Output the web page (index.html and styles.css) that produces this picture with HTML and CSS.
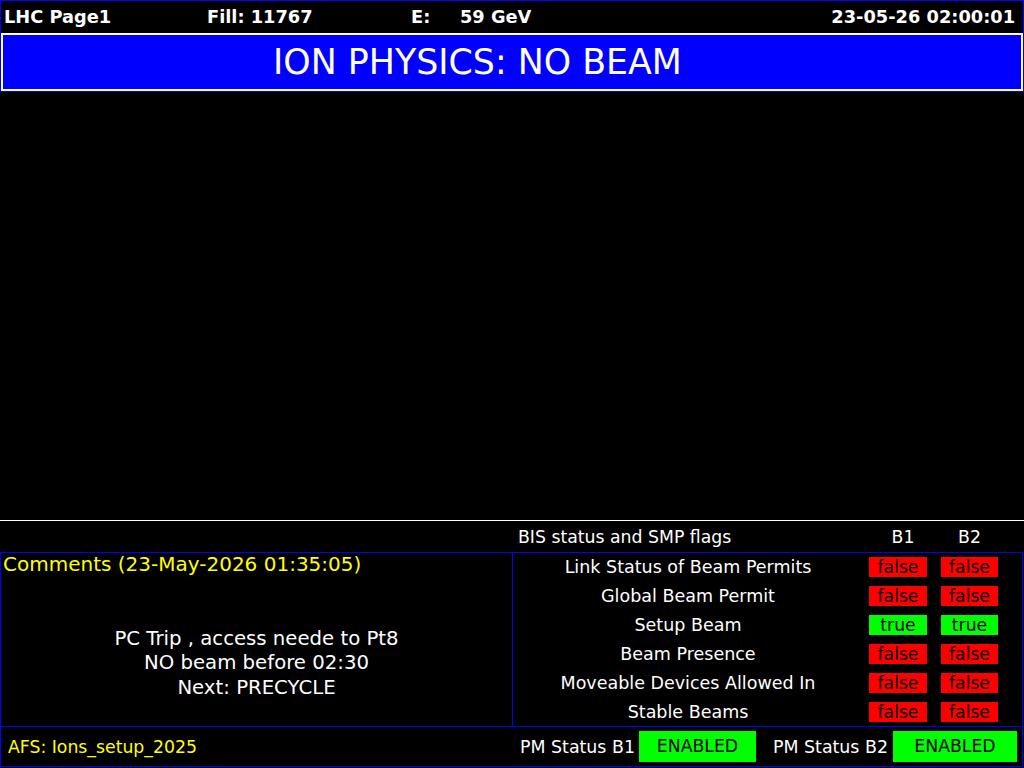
FILE: index.html
```html
<!DOCTYPE html>
<html lang="en">
<head>
    <meta charset="UTF-8">
    <title>LHC Page1</title>
    <link rel="stylesheet" href="styles.css">
</head>
<body>
    <div class="top">
        <div class="topbar">
            <span class="cell">LHC Page1</span>
            <span class="cell">Fill: 11767</span>
            <span class="cell energy"><span class="elabel">E:</span>59 GeV</span>
            <span class="date">23-05-26 02:00:01</span>
        </div>
        <div class="banner">ION PHYSICS: NO BEAM</div>
    </div>

    <div class="plot"></div>

    <div class="bishead">
        <span class="bistitle">BIS status and SMP flags</span>
        <span class="colhead">B1</span>
        <span class="colhead">B2</span>
    </div>

    <div class="bottom">
        <div class="mainrow">
            <div class="comments">
                <div class="ctitle">Comments (23-May-2026 01:35:05)</div>
                <div class="ctext">
                    PC Trip , access neede to Pt8<br>
                    NO beam before 02:30<br>
                    Next: PRECYCLE
                </div>
            </div>
            <div class="flags">
                <div class="flag">
                    <span class="flabel">Link Status of Beam Permits</span>
                    <span class="badge no">false</span>
                    <span class="badge no">false</span>
                </div>
                <div class="flag">
                    <span class="flabel">Global Beam Permit</span>
                    <span class="badge no">false</span>
                    <span class="badge no">false</span>
                </div>
                <div class="flag">
                    <span class="flabel">Setup Beam</span>
                    <span class="badge yes">true</span>
                    <span class="badge yes">true</span>
                </div>
                <div class="flag">
                    <span class="flabel">Beam Presence</span>
                    <span class="badge no">false</span>
                    <span class="badge no">false</span>
                </div>
                <div class="flag">
                    <span class="flabel">Moveable Devices Allowed In</span>
                    <span class="badge no">false</span>
                    <span class="badge no">false</span>
                </div>
                <div class="flag">
                    <span class="flabel">Stable Beams</span>
                    <span class="badge no">false</span>
                    <span class="badge no">false</span>
                </div>
            </div>
        </div>
        <div class="footer">
            <div class="afs">AFS: Ions_setup_2025</div>
            <div class="pm">
                <span class="pmlabel">PM Status B1</span>
                <span class="pmbox b1">ENABLED</span>
                <span class="pmlabel second">PM Status B2</span>
                <span class="pmbox b2">ENABLED</span>
            </div>
        </div>
    </div>
</body>
</html>
```

FILE: styles.css
```css
html, body {
    margin: 0;
    background: #000;
    color: #fff;
    font-family: "DejaVu Sans", sans-serif;
}
body {
    width: 1024px;
    height: 768px;
    overflow: hidden;
}

/* header with fill, energy and time */
.top {
    border: 1px solid #0000ff;
    height: 90px;
}
.topbar {
    height: 32px;
    display: flex;
    align-items: center;
    font-weight: bold;
    font-size: 17.8px;
    line-height: 20px;
}
.cell {
    width: 204px;
}
.topbar .cell:first-child {
    padding-left: 3px;
    width: 203px;
}
.elabel {
    display: inline-block;
    width: 49px;
}
.date {
    margin-left: auto;
    padding-right: 8px;
}
.banner {
    height: 54px;
    border: 2px solid #fff;
    background: #0000ff;
    font-size: 34.8px;
    line-height: 54px;
    padding-left: 270px;
}

.plot {
    height: 428px;
    border-bottom: 1px solid #fff;
}

/* flag header */
.bishead {
    height: 31px;
    display: flex;
    align-items: center;
    font-size: 17.3px;
}
.bistitle {
    width: 356px;
    padding-left: 518px;
}
.colhead {
    width: 58px;
    text-align: center;
}
.colhead + .colhead {
    margin-left: 9px;
    width: 57px;
}

/* bottom box */
.bottom {
    width: 1021px;
    height: 213px;
    border: 1px solid #0000ff;
}
.mainrow {
    height: 173px;
    display: flex;
    border-bottom: 1px solid #0000ff;
}
.comments {
    width: 511px;
}
.ctitle {
    color: #ffff00;
    font-size: 20px;
    line-height: 22px;
    padding-left: 2px;
}
.ctext {
    padding-top: 52px;
    text-align: center;
    font-size: 19.7px;
    line-height: 24.3px;
}
.flags {
    flex: 1;
    border-left: 1px solid #0000ff;
    display: flex;
    flex-direction: column;
}
.flag {
    flex: 1;
    display: flex;
    align-items: center;
}
.flabel {
    width: 350px;
    text-align: center;
    font-size: 17.5px;
}
.badge {
    width: 58px;
    height: 20px;
    line-height: 20px;
    margin-left: 6px;
    text-align: center;
    color: #000;
    font-size: 17.2px;
}
.badge + .badge {
    width: 57px;
    margin-left: 14px;
}
.no {
    background: #ff0000;
}
.yes {
    background: #00ff00;
}

.footer {
    height: 39px;
    display: flex;
    align-items: center;
}
.afs {
    width: 504px;
    padding-left: 7px;
    color: #ffff00;
    font-size: 17.3px;
}
.pm {
    display: flex;
    align-items: center;
    padding-left: 8px;
}
.pmlabel {
    width: 119px;
    font-size: 17.4px;
}
.pmlabel.second {
    margin-left: 17px;
    width: 120px;
}
.pmbox {
    height: 31px;
    line-height: 31px;
    background: #00ff00;
    color: #000;
    text-align: center;
    font-size: 17.3px;
}
.b1 {
    width: 117px;
}
.b2 {
    width: 124px;
}
```
